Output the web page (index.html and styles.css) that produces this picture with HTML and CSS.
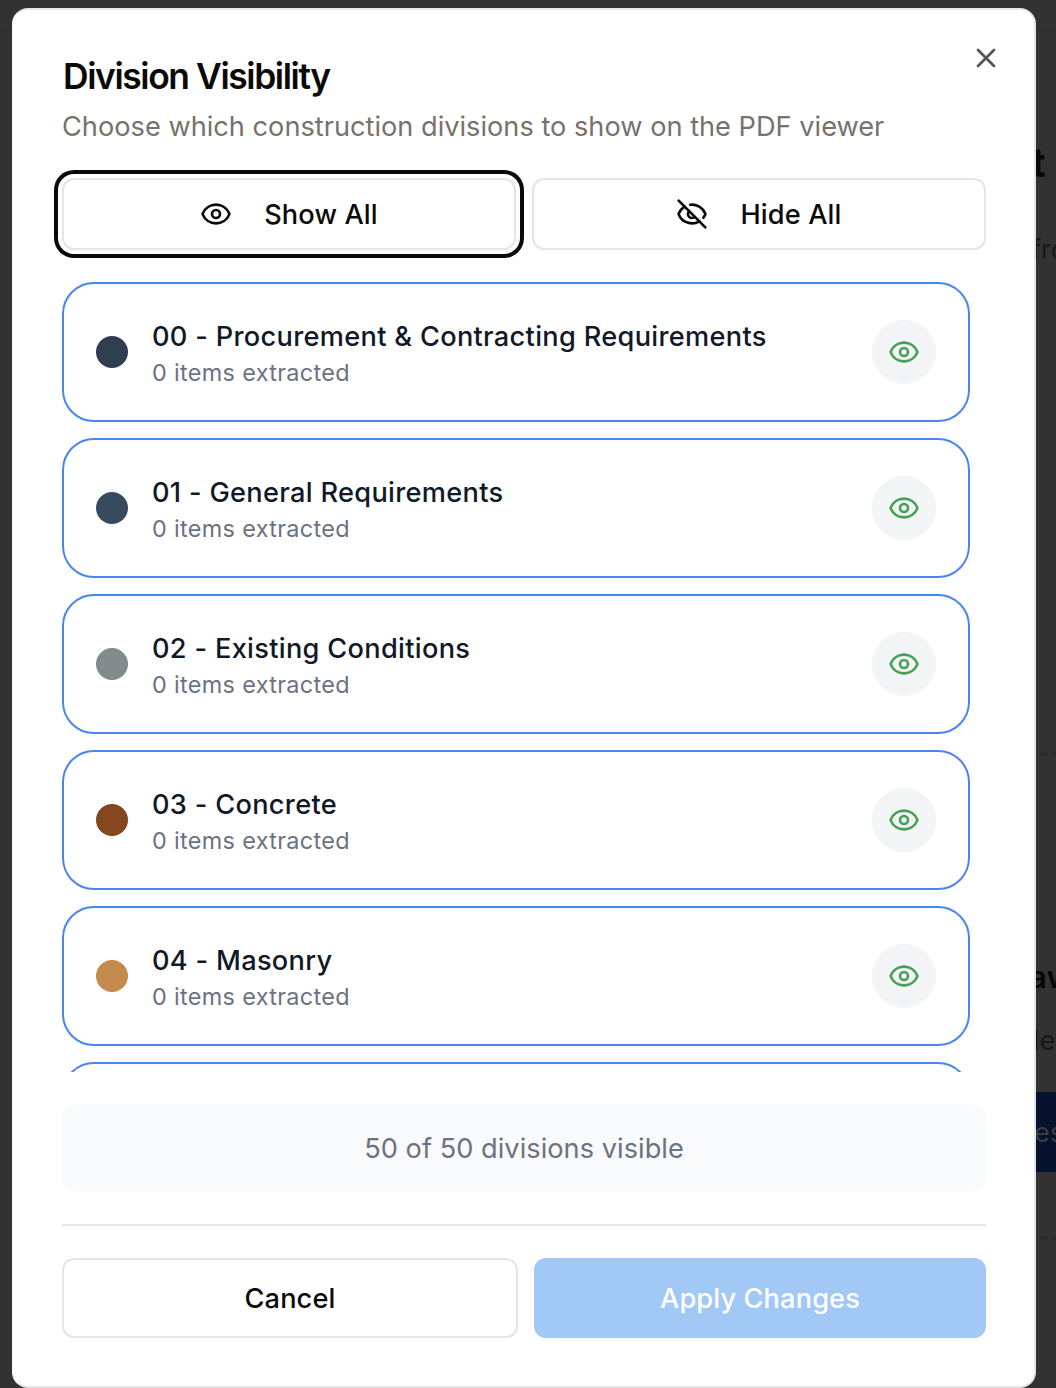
FILE: index.html
```html
<!DOCTYPE html>
<html lang="en">
<head>
<meta charset="utf-8">
<title>Division Visibility</title>
<link rel="stylesheet" href="styles.css">
</head>
<body>
<svg class="sprite" aria-hidden="true">
  <symbol id="eye" viewBox="0 0 24 24"><path d="M2.062 12.348a1 1 0 0 1 0-.696 10.75 10.75 0 0 1 19.876 0 1 1 0 0 1 0 .696 10.75 10.75 0 0 1-19.876 0"/><circle cx="12" cy="12" r="3"/></symbol>
  <symbol id="eye-off" viewBox="0 0 24 24"><path d="M10.733 5.076a10.744 10.744 0 0 1 11.205 6.575 1 1 0 0 1 0 .696 10.747 10.747 0 0 1-1.444 2.49"/><path d="M14.084 14.158a3 3 0 0 1-4.242-4.242"/><path d="M17.479 17.499a10.75 10.75 0 0 1-15.417-5.151 1 1 0 0 1 0-.696 10.75 10.75 0 0 1 4.446-5.143"/><path d="m2 2 20 20"/></symbol>
  <symbol id="close" viewBox="0 0 24 24"><path d="M18 6 6 18M6 6l12 12"/></symbol>
</svg>

<div class="page-behind" aria-hidden="true">
  <div class="page-topbar"></div>
  <span class="behind behind-title">t</span>
  <span class="behind behind-text">fro</span>
  <span class="behind-dash dash-top"></span>
  <span class="behind behind-heading">aw</span>
  <span class="behind behind-label">le</span>
  <span class="behind behind-button">es</span>
  <span class="behind-dash dash-bottom"></span>
</div>

<main class="dialog" role="dialog" aria-labelledby="title">
  <button class="close" aria-label="Close"><svg class="icon"><use href="#close"/></svg></button>
  <header class="header">
    <h1 class="title" id="title">Division Visibility</h1>
    <p class="subtitle">Choose which construction divisions to show on the PDF viewer</p>
  </header>
  <div class="bulk">
    <button class="btn bulk-btn focused"><svg class="icon"><use href="#eye"/></svg><span class="label">Show All</span></button>
    <button class="btn bulk-btn"><svg class="icon"><use href="#eye-off"/></svg><span class="label">Hide All</span></button>
  </div>
  <ul class="list">
    <li class="card"><span class="dot navy"></span><div class="info"><div class="name">00 - Procurement &amp; Contracting Requirements</div><div class="count">0 items extracted</div></div><button class="toggle" aria-label="Toggle"><svg class="icon"><use href="#eye"/></svg></button></li>
    <li class="card"><span class="dot slate"></span><div class="info"><div class="name">01 - General Requirements</div><div class="count">0 items extracted</div></div><button class="toggle" aria-label="Toggle"><svg class="icon"><use href="#eye"/></svg></button></li>
    <li class="card"><span class="dot grey"></span><div class="info"><div class="name">02 - Existing Conditions</div><div class="count">0 items extracted</div></div><button class="toggle" aria-label="Toggle"><svg class="icon"><use href="#eye"/></svg></button></li>
    <li class="card"><span class="dot brown"></span><div class="info"><div class="name">03 - Concrete</div><div class="count">0 items extracted</div></div><button class="toggle" aria-label="Toggle"><svg class="icon"><use href="#eye"/></svg></button></li>
    <li class="card"><span class="dot tan"></span><div class="info"><div class="name">04 - Masonry</div><div class="count">0 items extracted</div></div><button class="toggle" aria-label="Toggle"><svg class="icon"><use href="#eye"/></svg></button></li>
    <li class="card"></li>
  </ul>
  <p class="summary">50 of 50 divisions visible</p>
  <footer class="footer">
    <button class="btn cancel"><span class="label">Cancel</span></button>
    <button class="btn apply" disabled><span class="label">Apply Changes</span></button>
  </footer>
</main>
</body>
</html>
```

FILE: styles.css
```css
* { box-sizing: border-box; }
body {
  margin: 0;
  height: 1388px;
  padding: 8px 20px 0 12px;
  overflow: hidden;
  background: #323232;
  font-family: Inter, "Liberation Sans", sans-serif;
  font-size: 27.2px;
  line-height: 40px;
  letter-spacing: 0;
  color: #0c0a09;
}
h1, p, ul { margin: 0; padding: 0; }
button { font: inherit; letter-spacing: inherit; color: inherit; padding: 0; border: 0; }
.sprite { position: absolute; width: 0; height: 0; }
.icon {
  display: block;
  width: 32px;
  height: 32px;
  flex: none;
  fill: none;
  stroke: currentColor;
  stroke-width: 2;
  stroke-linecap: round;
  stroke-linejoin: round;
}

/* Dimmed page under the overlay */
.page-behind { position: absolute; inset: 0; overflow: hidden; }
.page-topbar { height: 32px; border-bottom: 2px solid #2e2e2e; }
.behind { position: absolute; white-space: nowrap; }
.behind-title { left: 1031px; top: 139px; font-size: 40px; line-height: 48px; font-weight: 700; color: #07080b; }
.behind-text { left: 1031px; top: 230px; color: #16181c; }
.behind-heading { left: 1029px; top: 957px; font-size: 31px; font-weight: 600; color: #05060a; }
.behind-label { left: 1033px; top: 1021px; color: #16181c; }
.behind-button { left: 1016px; top: 1092px; width: 60px; height: 80px; padding-left: 18px; line-height: 82px; background: #07122f; color: #3b3d3d; }
.behind-dash {
  position: absolute;
  left: 1040px;
  width: 16px;
  height: 4px;
  background: repeating-linear-gradient(90deg, #2b2c2d 0 8px, transparent 8px 12px);
}
.dash-top { top: 752px; }
.dash-bottom { top: 1236px; }

.dialog {
  position: relative;
  display: flex;
  flex-direction: column;
  height: 1380px;
  padding: 48px;
  border: 2px solid #e5e5e5;
  border-left-color: #fbfbfb;
  border-radius: 16px;
  background: #fff;
}
.close { position: absolute; top: 32px; right: 32px; background: none; color: #555453; }
.header { padding-top: 1px; }
.title { font-size: 35.4px; line-height: 36px; font-weight: 600; letter-spacing: -1.4px; padding-left: 1px; }
.subtitle { margin-top: 12px; color: #78716c; }
.btn {
  display: flex;
  align-items: center;
  justify-content: center;
  border: 2px solid #e5e5e5;
  border-radius: 12px;
  background: #fff;
  font-weight: 500;
  letter-spacing: 0.12px;
}
.label { padding-top: 2px; }
.bulk { display: grid; grid-template-columns: 1fr 1fr; gap: 16px; margin-top: 31px; }
.bulk-btn { height: 72px; gap: 32px; }
.focused { box-shadow: 0 0 0 4px #fff, 0 0 0 8px #0c0a09; }
.list {
  display: flex;
  flex-direction: column;
  gap: 16px;
  height: 790px;
  margin-top: 32px;
  padding-right: 16px;
  overflow: hidden;
  list-style: none;
}
.card {
  display: flex;
  flex: none;
  align-items: center;
  gap: 24px;
  height: 140px;
  padding: 0 32px;
  border: 2px solid #4a85ee;
  border-radius: 32px;
}
.dot { width: 32px; height: 32px; border-radius: 50%; }
.navy { background: #2f3e50; }
.slate { background: #37495d; }
.grey { background: #828b8c; }
.brown { background: #85461e; }
.tan { background: #c4894c; }
.info { flex: 1; padding-top: 2px; }
.name { font-weight: 500; letter-spacing: 0.31px; color: #111827; }
.count { font-size: 23.4px; line-height: 32px; letter-spacing: 0.34px; color: #6b7280; }
.toggle {
  display: grid;
  place-items: center;
  width: 64px;
  height: 64px;
  border-radius: 50%;
  background: #f3f4f6;
  color: #46a154;
}
.summary {
  height: 88px;
  margin-top: 32px;
  border-radius: 16px;
  background: #f9fafc;
  text-align: center;
  line-height: 90px;
  letter-spacing: 0.03px;
  color: #6b7280;
}
.footer {
  display: grid;
  grid-template-columns: 456px 1fr;
  gap: 16px;
  margin-top: 32px;
  padding-top: 32px;
  border-top: 2px solid #e5e5e5;
}
.footer .btn { height: 80px; }
.footer .apply { border: 0; background: #a2c8f5; color: #fff; }
```
